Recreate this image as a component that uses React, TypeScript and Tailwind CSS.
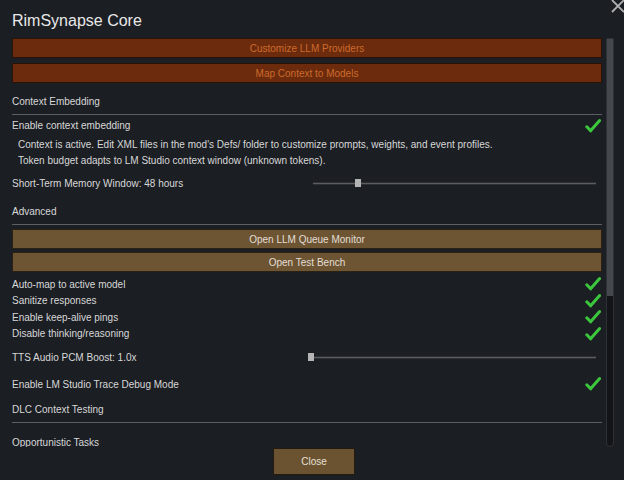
import React from "react";

function Check() {
  return (
    <svg width="16" height="14" viewBox="0 0 16 14" className="mr-[3px]">
      <path d="M1.8 7.8 L5.6 11.8 L14.6 1.6" fill="none" stroke="#3cc83c" strokeWidth="3" strokeLinecap="round" strokeLinejoin="round" />
    </svg>
  );
}

function Divider() {
  return <div className="h-px w-[590px] bg-[#5c5f63]" />;
}

function OrangeButton({ label, className = "" }: { label: string; className?: string }) {
  return (
    <div className={`flex h-[20px] w-[590px] items-center justify-center border border-[#2a1206] bg-[#6b2b0c] text-[10px] text-[#cd6a2c] ${className}`}>
      {label}
    </div>
  );
}

function TanButton({ label, className = "" }: { label: string; className?: string }) {
  return (
    <div className={`flex h-[20px] w-[590px] items-center justify-center border border-[#2c2213] bg-[#6d5534] text-[10px] text-[#e4ded4] ${className}`}>
      {label}
    </div>
  );
}

function Slider({ width, pos }: { width: string; pos: string }) {
  return (
    <div className={`relative mr-[8px] h-[8px] ${width}`}>
      <div className="absolute left-0 right-0 top-[3px] h-[3px] border-y border-[#2e3034] bg-[#5a5c5f]" />
      <div className={`absolute top-0 h-[8px] w-[6px] bg-[#b4b4b4] ${pos}`} />
    </div>
  );
}

function CheckRow({ label, h }: { label: string; h: string }) {
  return (
    <div className={`flex items-center justify-between ${h}`}>
      <span>{label}</span>
      <Check />
    </div>
  );
}

export default function App() {
  return (
    <div
      className="relative h-[480px] w-[624px] overflow-hidden bg-[#1b1e23] text-[10px] text-[#d8d8d8]"
      style={{ fontFamily: '"Liberation Sans", Arial, sans-serif' }}
    >
      <svg className="absolute left-[611px] top-[-1px]" width="14" height="14" viewBox="0 0 14 14">
        <path d="M1 1 L13 13 M13 1 L1 13" stroke="#b0b0b0" strokeWidth="1.8" />
      </svg>

      <div className="flex h-[38px] items-center pl-3 pt-[4px] text-[16px] text-[#e8e8e8]">RimSynapse Core</div>

      <div className="flex h-[410px]">
        <div className="h-[409px] w-[604px] overflow-hidden pl-3">
          <OrangeButton label="Customize LLM Providers" />
          <OrangeButton label="Map Context to Models" className="mt-[5px]" />

          <div className="mt-[5px] flex h-[26px] items-center">Context Embedding</div>
          <Divider />
          <div className="flex h-[21px] items-center justify-between">
            <span>Enable context embedding</span>
            <Check />
          </div>
          <div className="flex h-[16px] items-center pl-[6px]">
            Context is active. Edit XML files in the mod's Defs/ folder to customize prompts, weights, and event profiles.
          </div>
          <div className="flex h-[16px] items-center pl-[6px]">
            Token budget adapts to LM Studio context window (unknown tokens).
          </div>
          <div className="flex h-[30px] items-center justify-between">
            <span>Short-Term Memory Window: 48 hours</span>
            <Slider width="w-[283px]" pos="left-[42px]" />
          </div>

          <div className="flex h-[26px] items-center">Advanced</div>
          <Divider />
          <TanButton label="Open LLM Queue Monitor" className="mt-[4px]" />
          <TanButton label="Open Test Bench" className="mt-[3px]" />

          <div className="mt-[4px]">
            <CheckRow label="Auto-map to active model" h="h-[16.5px]" />
            <CheckRow label="Sanitize responses" h="h-[16.5px]" />
            <CheckRow label="Enable keep-alive pings" h="h-[16.5px]" />
            <CheckRow label="Disable thinking/reasoning" h="h-[16.5px]" />
          </div>

          <div className="flex h-[30px] items-center justify-between">
            <span>TTS Audio PCM Boost: 1.0x</span>
            <Slider width="w-[288px]" pos="left-0" />
          </div>
          <CheckRow label="Enable LM Studio Trace Debug Mode" h="h-[24px]" />

          <div className="flex h-[26px] items-center">DLC Context Testing</div>
          <Divider />
          <div className="flex h-[38px] items-center">Opportunistic Tasks</div>
        </div>

        <div className="ml-[2px] flex h-[409px] w-[8px] flex-col rounded-b-[4px] border border-[#2e3136] bg-[#121418]">
          <div className="h-[257px] w-full bg-[#45484d]" />
        </div>
      </div>

      <div className="flex">
        <div className="ml-[273px] flex h-[27px] w-[82px] items-center justify-center border border-[#231b0e] bg-[#6b5331] text-[10px] text-[#e6e0d6]">
          Close
        </div>
      </div>
    </div>
  );
}
